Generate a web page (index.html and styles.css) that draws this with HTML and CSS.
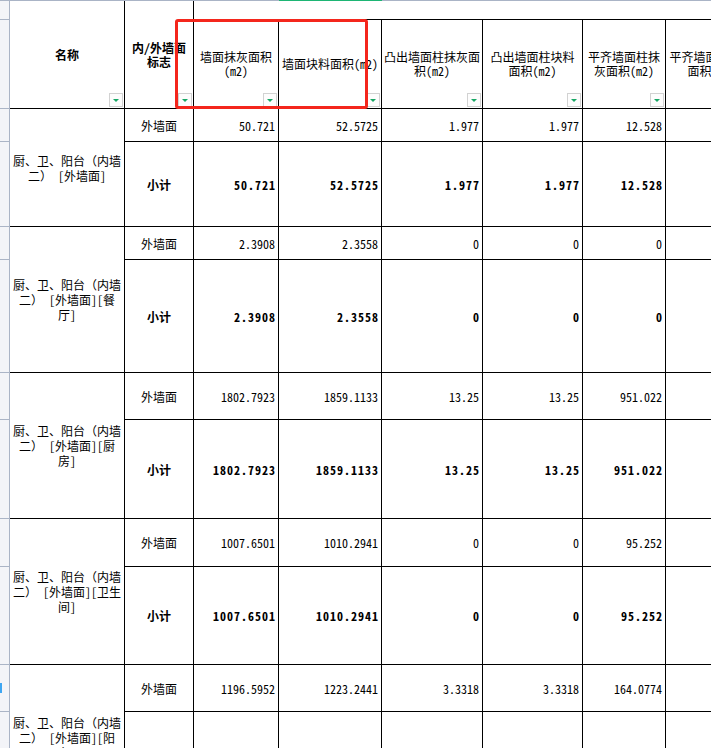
FILE: index.html
```html
<!DOCTYPE html>
<html lang="zh-CN">
<head>
<meta charset="utf-8">
<title>墙面面积表</title>
<link rel="stylesheet" href="styles.css">
</head>
<body>
<div class="topbar"></div>
<div class="sheet">
  <div class="grid">
    <div class="rh"></div>
    <div class="cell hc span2 bold"><span>名称</span><i class="filter"></i></div>
    <div class="cell hc span2 bold"><span>内/外墙面<br>标志</span><i class="filter"></i></div>
    <div class="band"></div>

    <div class="rh"></div>
    <div class="cell hc"><span>墙面抹灰面积<br>(m2)</span><i class="filter"></i></div>
    <div class="cell hc"><span>墙面块料面积(m2)</span><i class="filter"></i></div>
    <div class="cell hc"><span>凸出墙面柱抹灰面<br>积(m2)</span><i class="filter"></i></div>
    <div class="cell hc"><span>凸出墙面柱块料<br>面积(m2)</span><i class="filter"></i></div>
    <div class="cell hc"><span>平齐墙面柱抹<br>灰面积(m2)</span><i class="filter"></i></div>
    <div class="cell hc"><span>平齐墙面柱块料<br>面积(m2)</span><i class="filter"></i></div>

    <!-- group 1 -->
    <div class="rh"></div>
    <div class="cell label span2"><span>厨、卫、阳台（内墙<br>二） [外墙面]</span></div>
    <div class="cell"><span>外墙面</span></div>
    <div class="cell num">50.721</div>
    <div class="cell num">52.5725</div>
    <div class="cell num">1.977</div>
    <div class="cell num">1.977</div>
    <div class="cell num">12.528</div>
    <div class="cell"></div>
    <div class="rh"></div>
    <div class="cell tot"><span>小计</span></div>
    <div class="cell num tot">50.721</div>
    <div class="cell num tot">52.5725</div>
    <div class="cell num tot">1.977</div>
    <div class="cell num tot">1.977</div>
    <div class="cell num tot">12.528</div>
    <div class="cell"></div>

    <!-- group 2 -->
    <div class="rh"></div>
    <div class="cell label span2"><span>厨、卫、阳台（内墙<br>二） [外墙面][餐<br>厅]</span></div>
    <div class="cell"><span>外墙面</span></div>
    <div class="cell num">2.3908</div>
    <div class="cell num">2.3558</div>
    <div class="cell num">0</div>
    <div class="cell num">0</div>
    <div class="cell num">0</div>
    <div class="cell"></div>
    <div class="rh"></div>
    <div class="cell tot"><span>小计</span></div>
    <div class="cell num tot">2.3908</div>
    <div class="cell num tot">2.3558</div>
    <div class="cell num tot">0</div>
    <div class="cell num tot">0</div>
    <div class="cell num tot">0</div>
    <div class="cell"></div>

    <!-- group 3 -->
    <div class="rh"></div>
    <div class="cell label span2"><span>厨、卫、阳台（内墙<br>二） [外墙面][厨<br>房]</span></div>
    <div class="cell"><span>外墙面</span></div>
    <div class="cell num">1802.7923</div>
    <div class="cell num">1859.1133</div>
    <div class="cell num">13.25</div>
    <div class="cell num">13.25</div>
    <div class="cell num">951.022</div>
    <div class="cell"></div>
    <div class="rh"></div>
    <div class="cell tot"><span>小计</span></div>
    <div class="cell num tot">1802.7923</div>
    <div class="cell num tot">1859.1133</div>
    <div class="cell num tot">13.25</div>
    <div class="cell num tot">13.25</div>
    <div class="cell num tot">951.022</div>
    <div class="cell"></div>

    <!-- group 4 -->
    <div class="rh"></div>
    <div class="cell label span2"><span>厨、卫、阳台（内墙<br>二） [外墙面][卫生<br>间]</span></div>
    <div class="cell"><span>外墙面</span></div>
    <div class="cell num">1007.6501</div>
    <div class="cell num">1010.2941</div>
    <div class="cell num">0</div>
    <div class="cell num">0</div>
    <div class="cell num">95.252</div>
    <div class="cell"></div>
    <div class="rh"></div>
    <div class="cell tot"><span>小计</span></div>
    <div class="cell num tot">1007.6501</div>
    <div class="cell num tot">1010.2941</div>
    <div class="cell num tot">0</div>
    <div class="cell num tot">0</div>
    <div class="cell num tot">95.252</div>
    <div class="cell"></div>

    <!-- group 5 -->
    <div class="rh sel"></div>
    <div class="cell label span2"><span>厨、卫、阳台（内墙<br>二） [外墙面][阳<br>台]</span></div>
    <div class="cell"><span>外墙面</span></div>
    <div class="cell num">1196.5952</div>
    <div class="cell num">1223.2441</div>
    <div class="cell num">3.3318</div>
    <div class="cell num">3.3318</div>
    <div class="cell num">164.0774</div>
    <div class="cell"></div>
    <div class="rh"></div>
    <div class="cell tot"><span>小计</span></div>
    <div class="cell num tot">1196.5952</div>
    <div class="cell num tot">1223.2441</div>
    <div class="cell num tot">3.3318</div>
    <div class="cell num tot">3.3318</div>
    <div class="cell num tot">164.0774</div>
    <div class="cell"></div>
  </div>
  <div class="mark"></div>
</div>
</body>
</html>
```

FILE: styles.css
```css
html, body {
  margin: 0;
  padding: 0;
  overflow: hidden;
  background: #fff;
}

body {
  width: 711px;
  height: 748px;
  font-family: "Noto Sans Mono CJK SC", "Noto Sans CJK SC", "DejaVu Sans Mono", monospace;
  font-size: 12px;
  color: #000;
}

.topbar {
  height: 1px;
  background: linear-gradient(to right, #aab4c6 279px, #1db574 279px, #1db574 382px, #aab4c6 382px);
}

.sheet {
  position: relative;
}

.grid {
  display: grid;
  width: 757px;
  grid-template-columns: 10px 115px 69px 85px 103px 101px 100px 83px 92px;
  grid-template-rows: 19px 89px 33px 85px 33px 113px 47px 99px 48px 98px 47px 98px;
}

.rh {
  grid-column: 1;
  box-sizing: border-box;
  background: #f3f4f8;
  border-right: 1px solid #aab4c6;
  border-bottom: 1px solid #aab4c6;
}

.rh.sel {
  position: relative;
}

.rh.sel::before {
  content: "";
  position: absolute;
  left: 0;
  top: 18px;
  width: 2px;
  height: 10px;
  background: #3ea6f2;
}

.band {
  grid-column: 4 / -1;
  box-sizing: border-box;
  border-bottom: 1px solid #000;
}

.cell {
  box-sizing: border-box;
  border-right: 1px solid #000;
  border-bottom: 1px solid #000;
  display: flex;
  align-items: center;
  justify-content: center;
  text-align: center;
  white-space: nowrap;
  line-height: 15px;
  min-width: 0;
}

.span2 {
  grid-row: span 2;
}

.hc {
  position: relative;
  line-height: 14px;
}

.bold,
.tot {
  font-weight: bold;
}

.num {
  justify-content: flex-end;
  padding-right: 3px;
}

.num.tot {
  letter-spacing: 1px;
  padding-right: 2px;
}

.filter {
  position: absolute;
  right: 1px;
  bottom: 1px;
  width: 14px;
  height: 14px;
  box-sizing: border-box;
  border: 1px solid #d2d2d2;
  background: #fdfdfd;
  display: flex;
  align-items: center;
  justify-content: center;
}

.filter::after {
  content: "";
  width: 0;
  height: 0;
  margin-top: 1px;
  border-left: 3px solid transparent;
  border-right: 3px solid transparent;
  border-top: 3px solid #17a865;
}

.mark {
  position: absolute;
  left: 175px;
  top: 18px;
  width: 193px;
  height: 90px;
  box-sizing: border-box;
  border: 3px solid #f4261c;
  border-radius: 3px;
  pointer-events: none;
}
```
